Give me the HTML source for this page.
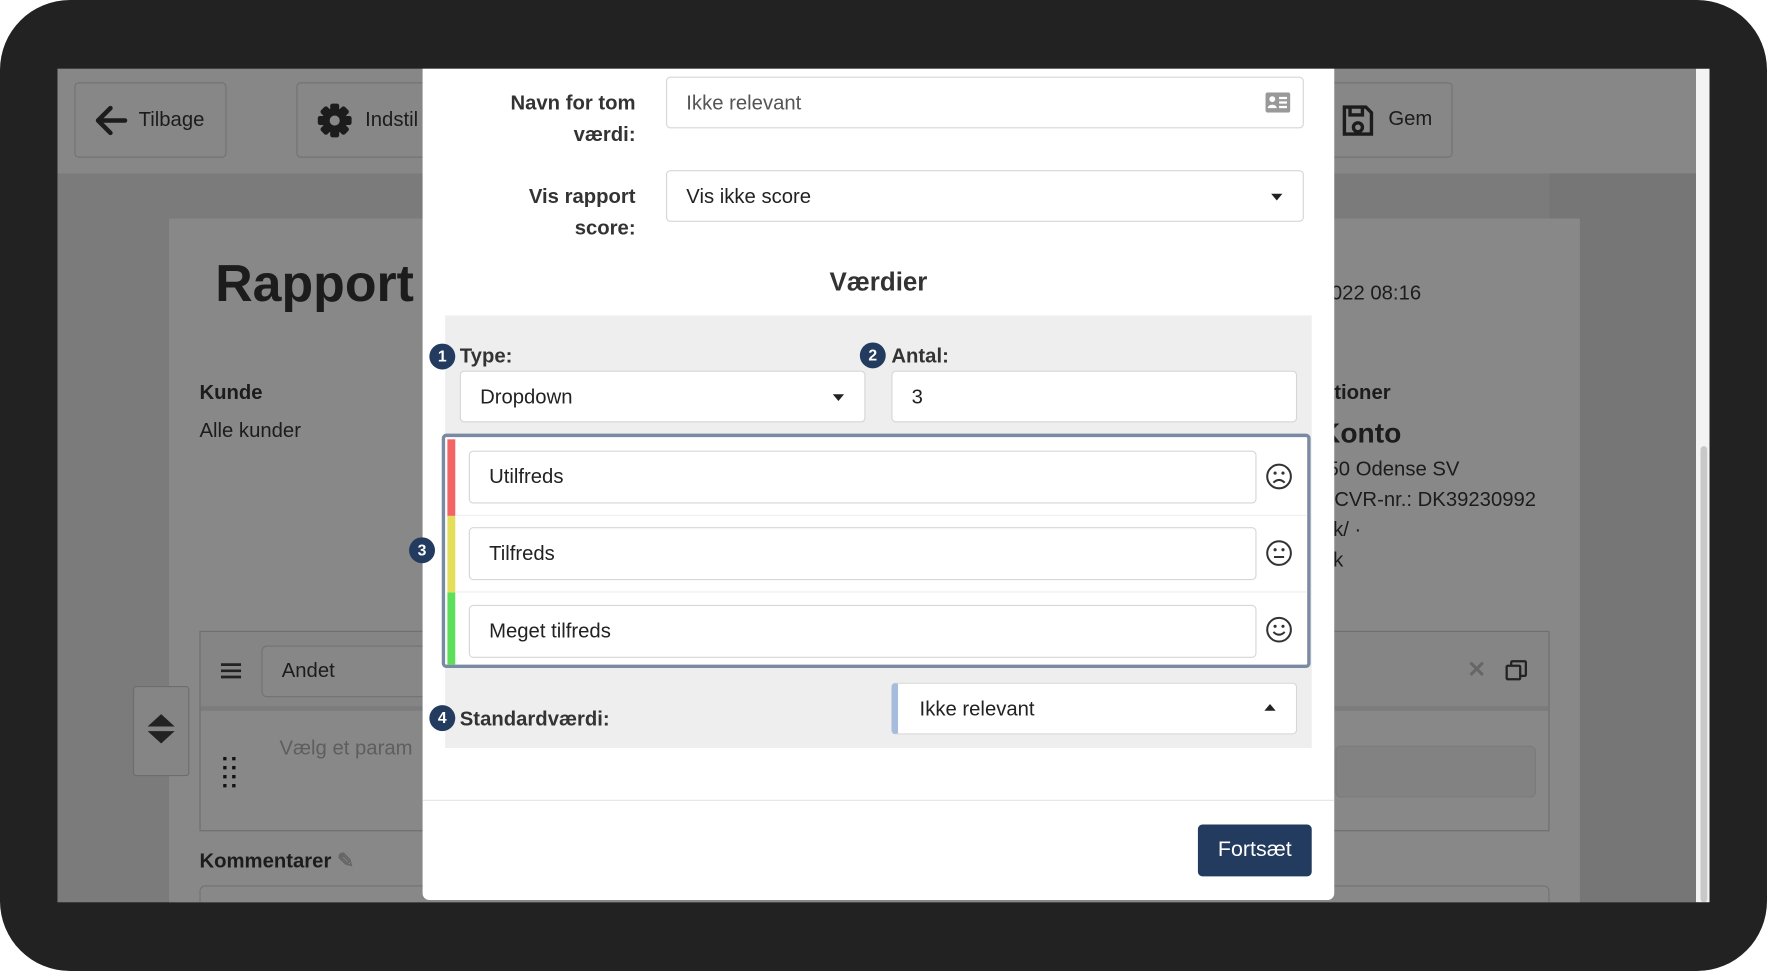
<!DOCTYPE html>
<html><head><meta charset="utf-8"><style>
*{box-sizing:border-box;margin:0;padding:0}
html,body{width:1767px;height:971px;overflow:hidden;background:#fff}
#w{position:absolute;left:0;top:0;width:1568px;height:862px;transform:scale(1.12691,1.12645);transform-origin:0 0;font-family:"Liberation Sans",sans-serif;color:#222}
.a{position:absolute}
.frame{left:0;top:0;width:1568px;height:862px;background:#222;border-radius:62px}
.scr{left:51px;top:61px;width:1466px;height:740px;background:#7b7b7b;overflow:hidden}
.btn{position:absolute;border:1px solid #727272;border-radius:4px;background:#878787;font-size:18px;color:#1c1c1c}
.in{position:absolute;background:#fff;border:1px solid #d6d6d6;border-radius:4px;font-size:18px;color:#333}
.lbl{position:absolute;font-weight:bold;font-size:18px;color:#333;text-align:right;line-height:27px}
.num{position:absolute;width:23px;height:23px;border-radius:50%;background:#233b5e;color:#fff;font-weight:bold;font-size:14px;text-align:center;line-height:23px}
.face{position:absolute}
</style></head><body><div id="w">
<div class="a frame"></div>
<div class="a scr">
  <div class="a" style="left:0;top:0;width:1466px;height:93px;background:#878787"></div>
  <div class="btn" style="left:15px;top:12px;width:135px;height:67px"><svg class="a" style="left:16px;top:19px" width="30" height="28" viewBox="0 0 30 28"><path d="M28 14H5M15 3L4 14l11 11" fill="none" stroke="#1c1c1c" stroke-width="4" stroke-linecap="round" stroke-linejoin="round"/></svg><span class="a" style="left:56px;top:22px">Tilbage</span></div>
  <div class="btn" style="left:212px;top:12px;width:140px;height:67px"><svg class="a" style="left:17px;top:17px" width="32" height="32" viewBox="0 0 32 32"><g fill="#1c1c1c"><circle cx="16" cy="16" r="11"/><rect x="12" y="1" width="8" height="30" rx="2"/><rect x="12" y="1" width="8" height="30" rx="2" transform="rotate(45 16 16)"/><rect x="12" y="1" width="8" height="30" rx="2" transform="rotate(90 16 16)"/><rect x="12" y="1" width="8" height="30" rx="2" transform="rotate(135 16 16)"/></g><circle cx="16" cy="16" r="4.5" fill="#878787"/></svg><span class="a" style="left:60px;top:22px">Indstil</span></div>
  <div class="btn" style="left:1110px;top:12px;width:128px;height:67px"><svg class="a" style="left:28px;top:18px" width="30" height="30" viewBox="0 0 30 30"><path d="M3 3h19l5 5v19H3z M8 3v7h11V3 M15 21m-4 0a4 4 0 1 0 8 0a4 4 0 1 0-8 0" fill="none" stroke="#1c1c1c" stroke-width="3"/></svg><span class="a" style="left:70px;top:21px">Gem</span></div>
  <div class="a" style="left:1324px;top:93px;width:130px;height:647px;background:#767676"></div>
  <div class="a" style="left:1454px;top:0;width:12px;height:740px;background:#f3f3f3"></div>
  <div class="a" style="left:1458px;top:335px;width:6px;height:405px;background:#c8c8c8;border-radius:3px"></div>
  <div class="a" style="left:99px;top:133px;width:1252px;height:620px;background:#888"></div>
  <div class="a" style="left:140px;top:163px;font-size:46px;font-weight:bold;color:#1c1c1c">Rapport</div>
  <div class="a" style="left:126px;top:277px;font-size:18px;font-weight:bold;color:#1c1c1c">Kunde</div>
  <div class="a" style="left:126px;top:311px;font-size:18px;color:#1c1c1c">Alle kunder</div>
  <div class="a" style="left:1120px;top:189px;font-size:18px;color:#1c1c1c;width:300px">2022 08:16</div>
  <div class="a" style="left:1116px;top:277px;font-size:18px;font-weight:bold;color:#1c1c1c">rationer</div>
  <div class="a" style="left:1112px;top:310px;font-size:25px;font-weight:bold;color:#1c1c1c">:Konto</div>
  <div class="a" style="left:1117px;top:342px;font-size:18px;color:#1c1c1c;line-height:27px">650 Odense SV<br>· &nbsp;CVR-nr.: DK39230992<br>.dk/ ·<br>.dk</div>
  <div class="a" style="left:126px;top:499px;width:1198px;height:178px;border:1px solid #6d6d6d"></div>
  <div class="a" style="left:127px;top:500px;width:1196px;height:70px;background:#858585;border-bottom:4px solid #7c7c7c"></div>
  <svg class="a" style="left:145px;top:527px" width="18" height="15" viewBox="0 0 18 15"><path d="M0 2h18M0 7.5h18M0 13h18" stroke="#222" stroke-width="2.4"/></svg>
  <div class="a" style="left:181px;top:512px;width:200px;height:46px;border:1px solid #727272;border-radius:5px;background:#878787;font-size:18px;padding:11px 17px;color:#1c1c1c">Andet</div>
  <div class="a" style="left:1251px;top:521px;font-size:20px;color:#666;font-weight:bold">&#10005;</div>
  <div class="a" style="left:1289px;top:525px;width:15px;height:15px;border:2px solid #222;border-radius:2px"></div>
  <div class="a" style="left:1285px;top:529px;width:14px;height:14px;border:2px solid #222;border-radius:2px;background:#858585"></div>
  <div class="a" style="left:1134px;top:601px;width:178px;height:46px;border:1px solid #7b7b7b;border-radius:5px;background:#828282"></div>
  <div class="a" style="left:197px;top:593px;font-size:18px;color:#5e5e5e">Vælg et param</div>
  <svg class="a" style="left:147px;top:611px" width="14" height="28" viewBox="0 0 14 28"><g fill="#111"><rect x="0" y="0" width="3" height="3"/><rect x="8" y="0" width="3" height="3"/><rect x="0" y="8" width="3" height="3"/><rect x="8" y="8" width="3" height="3"/><rect x="0" y="16" width="3" height="3"/><rect x="8" y="16" width="3" height="3"/><rect x="0" y="24" width="3" height="3"/><rect x="8" y="24" width="3" height="3"/></g></svg>
  <div class="a" style="left:67px;top:548px;width:50px;height:80px;border:1px solid #6d6d6d;border-radius:3px;background:#858585"></div>
  <div class="a" style="left:80px;top:573px;width:0;height:0;border:12px solid transparent;border-bottom:11px solid #222;border-top:0"></div>
  <div class="a" style="left:80px;top:588px;width:0;height:0;border:12px solid transparent;border-top:11px solid #222;border-bottom:0"></div>
  <div class="a" style="left:126px;top:693px;font-size:18px;font-weight:bold;color:#1c1c1c">Kommentarer <span style="color:#666">&#9998;</span></div>
  <div class="a" style="left:126px;top:725px;width:1198px;height:30px;border:1px solid #727272;border-radius:5px"></div>
</div>
<!-- modal -->
<div class="a" style="left:375px;top:61px;width:809px;height:738px;background:#fff;border-radius:0 0 6px 6px">
  <div class="lbl" style="left:0;top:16px;width:189px;line-height:28px">Navn for tom<br>værdi:</div>
  <div class="in" style="left:216px;top:7px;width:566px;height:46px;padding:12px 17px;color:#555">Ikke relevant
    <svg class="a" style="right:11px;top:13px" width="22" height="18" viewBox="0 0 22 18"><rect x="0" y="0" width="22" height="18" rx="2" fill="#999"/><circle cx="6" cy="6" r="2.6" fill="#fff"/><path d="M2 14c0-4 8-4 8 0z" fill="#fff"/><rect x="12" y="4" width="7" height="2" fill="#fff"/><rect x="12" y="8" width="7" height="2" fill="#fff"/><rect x="12" y="12" width="7" height="2" fill="#fff"/></svg></div>
  <div class="lbl" style="left:0;top:99px;width:189px;line-height:28px">Vis rapport<br>score:</div>
  <div class="in" style="left:216px;top:90px;width:566px;height:46px;padding:12px 17px;color:#222">Vis ikke score<span class="a" style="right:18px;top:20px;border:5px solid transparent;border-top:6px solid #222;border-bottom:0"></span></div>
  <div class="a" style="left:0;top:176px;width:809px;text-align:center;font-size:23px;font-weight:bold;color:#333">Værdier</div>
  <div class="a" style="left:20px;top:219px;width:769px;height:384px;background:#eee"></div>
  <div class="num" style="left:6px;top:244px">1</div>
  <div class="a" style="left:33px;top:245px;font-size:18px;font-weight:bold;color:#333">Type:</div>
  <div class="num" style="left:388px;top:243px">2</div>
  <div class="a" style="left:416px;top:245px;font-size:18px;font-weight:bold;color:#333">Antal:</div>
  <div class="in" style="left:33px;top:268px;width:360px;height:46px;padding:12px 17px;color:#222">Dropdown<span class="a" style="right:18px;top:20px;border:5px solid transparent;border-top:6px solid #222;border-bottom:0"></span></div>
  <div class="in" style="left:416px;top:268px;width:360px;height:46px;padding:12px 17px;color:#222">3</div>
  <div class="a" style="left:17px;top:324px;width:771px;height:208px;border:3px solid #7a8aa2;border-radius:4px;background:#fff;overflow:hidden">
    <div class="a" style="left:2px;top:2px;width:7px;height:68px;background:#f36464"></div>
    <div class="a" style="left:2px;top:70px;width:7px;height:68px;background:#e3df5c"></div>
    <div class="a" style="left:2px;top:138px;width:7px;height:68px;background:#5edf5c"></div>
    <div class="a" style="left:9px;top:69px;width:760px;height:1px;background:#eee"></div>
    <div class="a" style="left:9px;top:137px;width:760px;height:1px;background:#eee"></div>
    <div class="in" style="left:21px;top:12px;width:699px;height:47px;padding:12px 17px;color:#222">Utilfreds</div>
    <div class="in" style="left:21px;top:80px;width:699px;height:47px;padding:12px 17px;color:#222">Tilfreds</div>
    <div class="in" style="left:21px;top:149px;width:699px;height:47px;padding:12px 17px;color:#222">Meget tilfreds</div>
    <svg class="face" style="left:728px;top:23px" width="24" height="24" viewBox="0 0 24 24"><circle cx="12" cy="12" r="10.5" fill="none" stroke="#333" stroke-width="1.8"/><circle cx="8.5" cy="9" r="1.4" fill="#333"/><circle cx="15.5" cy="9" r="1.4" fill="#333"/><path d="M7 17.5q5-5 10 0" fill="none" stroke="#333" stroke-width="1.8"/></svg>
    <svg class="face" style="left:728px;top:91px" width="24" height="24" viewBox="0 0 24 24"><circle cx="12" cy="12" r="10.5" fill="none" stroke="#333" stroke-width="1.8"/><circle cx="8.5" cy="9" r="1.4" fill="#333"/><circle cx="15.5" cy="9" r="1.4" fill="#333"/><path d="M7.5 15.5h9" stroke="#333" stroke-width="1.8"/></svg>
    <svg class="face" style="left:728px;top:159px" width="24" height="24" viewBox="0 0 24 24"><circle cx="12" cy="12" r="10.5" fill="none" stroke="#333" stroke-width="1.8"/><circle cx="8.5" cy="9" r="1.4" fill="#333"/><circle cx="15.5" cy="9" r="1.4" fill="#333"/><path d="M7 14q5 5 10 0" fill="none" stroke="#333" stroke-width="1.8"/></svg>
  </div>
  <div class="num" style="left:-12px;top:416px">3</div>
  <div class="num" style="left:6px;top:565px">4</div>
  <div class="a" style="left:33px;top:567px;font-size:18px;font-weight:bold;color:#333">Standardværdi:</div>
  <div class="in" style="left:416px;top:545px;width:360px;height:46px;padding:12px 19px;color:#222;border-left:6px solid #a6bcdc">Ikke relevant<span class="a" style="right:18px;top:18px;border:5px solid transparent;border-bottom:6px solid #222;border-top:0"></span></div>
  <div class="a" style="left:0;top:649px;width:809px;height:1px;background:#e5e5e5"></div>
  <div class="a" style="left:688px;top:671px;width:101px;height:46px;background:#233b5e;border-radius:4px;color:#fff;font-size:19px;text-align:center;line-height:46px">Fortsæt</div>
</div>
</div></body></html>
